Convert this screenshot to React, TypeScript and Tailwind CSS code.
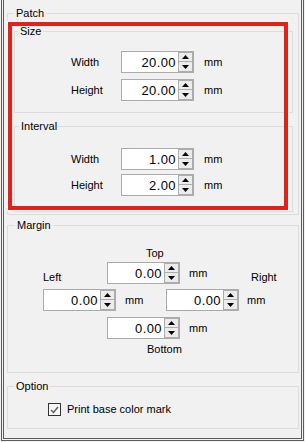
import React from "react";

const Arrow = ({ up }: { up?: boolean }) => (
  <svg width="7" height="4" viewBox="0 0 7 4" className="block">
    {up ? <polygon points="3.5,0 7,4 0,4" fill="#000" /> : <polygon points="0,0 7,0 3.5,4" fill="#000" />}
  </svg>
);

function Spin({ value }: { value: string }) {
  return (
    <div className="flex h-[22px] w-[73px] shrink-0 items-center border border-[#ababab] bg-white">
      <span className="flex-1 text-right text-[13px] leading-none tracking-[0.4px]">{value}</span>
      <div className="ml-[2px] flex h-[20px] w-[15px] flex-col">
        <div className="flex h-[10px] items-center justify-center border border-[#adadad] bg-[#ececec]">
          <Arrow up />
        </div>
        <div className="flex h-[10px] items-center justify-center border border-t-0 border-[#adadad] bg-[#ececec]">
          <Arrow />
        </div>
      </div>
    </div>
  );
}

function Group({
  title,
  className,
  legendClass = "ml-[5px]",
  children,
}: {
  title: string;
  className?: string;
  legendClass?: string;
  children?: React.ReactNode;
}) {
  return (
    <fieldset className={`border border-[#dcdcdc] ${className ?? ""}`}>
      <legend className={`${legendClass} px-[2px] text-[11px] leading-[13px]`}>{title}</legend>
      {children}
    </fieldset>
  );
}

function Row({ label, value }: { label: string; value: string }) {
  return (
    <div className="flex items-center">
      <span className="w-[50px]">{label}</span>
      <Spin value={value} />
      <span className="ml-[10px]">mm</span>
    </div>
  );
}

export default function App() {
  return (
    <div className="relative h-[442px] w-[305px] bg-[#f1f1f1] px-px pb-px font-['Liberation_Sans',Arial,sans-serif] text-[11px] leading-[13px] text-black">
      <div className="h-full border-x border-b border-[#5c5c5c] px-px pb-px">
        <div className="h-full border-x border-b border-[#5c5c5c] pt-[7px]">
          <Group title="Patch" className="ml-[3px] h-[208px] w-[292px]" legendClass="ml-[6px]">
            <Group title="Size" className="ml-[6px] mt-[5px] h-[88px] w-[279px]" legendClass="ml-[3px]">
              <div className="mt-[13px] flex flex-col gap-[6px] pl-[56px]">
                <Row label="Width" value="20.00" />
                <Row label="Height" value="20.00" />
              </div>
            </Group>
            <Group title="Interval" className="ml-[6px] mt-[7px] h-[92px] w-[279px]" legendClass="ml-[4px]">
              <div className="mt-[15px] flex flex-col gap-[4px] pl-[56px]">
                <Row label="Width" value="1.00" />
                <Row label="Height" value="2.00" />
              </div>
            </Group>
          </Group>

          <Group title="Margin" className="ml-[3px] mt-[4px] h-[154px] w-[292px]" legendClass="ml-[7px]">
            <div className="ml-[138px] mt-[15px]">Top</div>
            <div className="mt-[2px] flex items-end">
              <span className="ml-[35px] w-[64px]">Left</span>
              <div className="flex w-[144px] items-center">
                <Spin value="0.00" />
                <span className="ml-[9px]">mm</span>
              </div>
              <span>Right</span>
            </div>
            <div className="mt-[5px] flex items-center">
              <div className="ml-[35px] flex w-[123px] items-center">
                <Spin value="0.00" />
                <span className="ml-[9px]">mm</span>
              </div>
              <Spin value="0.00" />
              <span className="ml-[8px]">mm</span>
            </div>
            <div className="ml-[99px] mt-[6px] flex items-center">
              <Spin value="0.00" />
              <span className="ml-[9px]">mm</span>
            </div>
            <div className="ml-[139px] mt-[4px]">Bottom</div>
          </Group>

          <Group title="Option" className="ml-[3px] mt-[7px] h-[49px] w-[292px]" legendClass="ml-[6px]">
            <div className="ml-[40px] mt-[10px] flex items-center">
              <span className="flex h-[13px] w-[13px] items-center justify-center border border-[#333333] bg-[#f7f7f7]">
                <svg width="9" height="8" viewBox="0 0 9 8">
                  <polyline points="1,4 3.5,6.5 8,1" fill="none" stroke="#5a5a5a" strokeWidth="1.4" />
                </svg>
              </span>
              <span className="ml-[6px]">Print base color mark</span>
            </div>
          </Group>
        </div>
      </div>

      <div className="pointer-events-none absolute left-[8px] top-[22px] h-[188px] w-[280px] border-4 border-[#e32119] shadow-[0_0_0_1px_#ffffff]" />
    </div>
  );
}
